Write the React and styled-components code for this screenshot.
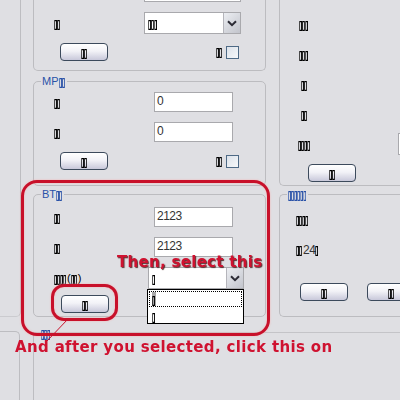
import React from 'react';
import styled, { createGlobalStyle } from 'styled-components';

const Global = createGlobalStyle`
  html, body { margin: 0; padding: 0; }
  body { background: #dfdfe3; font-family: "Liberation Sans", Arial, sans-serif; }
`;

const Screen = styled.div`
  position: relative;
  width: 400px;
  height: 400px;
  overflow: hidden;
  background: #dfdfe3;
  color: #000;
  font-size: 11px;
`;

// missing-font boxes of the original, squeezed to their narrow width
const TofuRun = styled.span`
  display: inline-block;
  width: ${p => p.$n * 3 + 1}px;
  height: 10px;
  font-family: "DejaVu Sans", sans-serif;
  font-size: 12px;
  line-height: 10px;
  vertical-align: -1px;
  text-align: left;
  white-space: nowrap;
  transform: scaleX(0.46);
  transform-origin: 0 50%;
  will-change: transform;
  -webkit-text-stroke: 0.7px currentColor;
`;

const Tofu = ({ n = 2 }) => <TofuRun $n={n}>{'\u25AF'.repeat(n)}</TofuRun>;

const TopArea = styled.div`
  display: flex;
  height: 317px;
`;

const SidePanel = styled.div`
  flex: none;
  width: 21px;
  box-sizing: border-box;
  border-right: 1px solid #bdbdc1;
  border-bottom: 1px solid #cbcbcf;
  border-bottom-right-radius: 5px;
`;

const LeftColumn = styled.div`
  flex: none;
  width: 233px;
  margin-left: 12px;
  display: flex;
  flex-direction: column;
`;

const RightColumn = styled.div`
  flex: none;
  width: 200px;
  margin-left: 13px;
  display: flex;
  flex-direction: column;
  gap: 8px;
`;

const Group = styled.div`
  position: relative;
  box-sizing: border-box;
  height: ${p => p.$height}px;
  margin-top: ${p => p.$gap || 0}px;
  padding-top: ${p => p.$pad || 0}px;
  border: 1px solid #bcbcc0;
  border-top: ${p => (p.$open ? 'none' : '1px solid #bcbcc0')};
  border-radius: ${p => (p.$open ? '0 0 5px 5px' : '5px')};
  ${p => p.$clip && 'border-right: none;'}
`;

const Legend = styled.span`
  position: absolute;
  top: -6px;
  left: ${p => p.$left || 7}px;
  padding: 0 1px;
  background: #dfdfe3;
  color: #2a52a8;
  line-height: 11px;
  white-space: nowrap;
`;

const LowLegend = styled(Legend)`
  top: -4px;
  height: 9px;
  line-height: 9px;
  background: none;
  padding: 0;
`;

const Row = styled.div`
  display: flex;
  align-items: center;
  height: ${p => p.$height || 20}px;
  margin-top: ${p => p.$top || 0}px;
  margin-bottom: ${p => p.$gap ?? 10}px;
  padding-left: ${p => p.$indent ?? 20}px;
`;

const Label = styled.span`
  flex: none;
  width: ${p => p.$width}px;
  text-align: ${p => p.$align || 'left'};
  white-space: nowrap;
  line-height: 12px;
`;

const Digits = styled.span`
  font-size: 12px;
  letter-spacing: -0.5px;
  vertical-align: -1px;
  color: #333;
`;

const Field = styled.div`
  flex: none;
  box-sizing: border-box;
  width: ${p => p.$width || 79}px;
  height: ${p => p.$height || 20}px;
  margin-left: ${p => p.$left || 0}px;
  padding: 0 2px;
  background: #fff;
  border: 1px solid #a9a9ad;
  font-size: 12px;
  letter-spacing: -0.5px;
  line-height: 17px;
  color: #333;
`;

const FieldStub = styled(Field)`
  width: 97px;
  height: 2px;
  margin-left: 110px;
  border-top: none;
`;

const SelectBox = styled.div`
  position: relative;
  flex: none;
  box-sizing: border-box;
  display: flex;
  align-items: center;
  justify-content: space-between;
  width: ${p => p.$width}px;
  height: 22px;
  padding-left: 3px;
  background: #fff;
  border: 1px solid #a9a9ad;
`;

const SelectArrow = styled.span`
  flex: none;
  display: flex;
  align-items: center;
  justify-content: center;
  width: 16px;
  height: 20px;
  background: linear-gradient(135deg, #eceef2, #c2c4cc);
  border-left: 1px solid #b5b5bb;
`;

const DropList = styled.div`
  position: absolute;
  top: 21px;
  left: -2px;
  box-sizing: border-box;
  width: 97px;
  height: 35px;
  padding: 1px;
  background: #fff;
  border: 1px solid #000;
`;

const DropItem = styled.div`
  box-sizing: border-box;
  height: 16px;
  padding-left: 2px;
  line-height: 14px;
  margin-bottom: 1px;
  border: 1px dotted ${p => (p.$active ? '#000' : 'transparent')};
`;

const Highlight = styled.span`
  display: inline-block;
  background: #a8a8a8;
`;

const Actions = styled.div`
  display: flex;
  align-items: center;
  justify-content: space-between;
  margin-top: ${p => p.$top || 0}px;
  padding-left: 26px;
  padding-right: 26px;
`;

const ButtonRow = styled.div`
  display: flex;
  gap: 19px;
  margin-top: ${p => p.$top || 0}px;
  padding-left: ${p => p.$indent}px;
`;

const PushButton = styled.button`
  flex: none;
  box-sizing: border-box;
  width: 48px;
  height: 18px;
  padding: 0;
  font: inherit;
  line-height: 14px;
  color: #000;
  background: linear-gradient(#ffffff, #f2f2f7 45%, #c8c8da);
  border: 1px solid #3c4a5c;
  border-radius: 4px;
`;

const CheckWrap = styled.span`
  display: flex;
  align-items: center;
  gap: 3px;
`;

const CheckBox = styled.span`
  display: block;
  box-sizing: border-box;
  width: 13px;
  height: 13px;
  background: linear-gradient(135deg, #dce2ea, #f6f8fa);
  border: 1px solid #4e6a86;
`;

const BottomArea = styled.div`
  display: flex;
  height: 69px;
  margin-top: 14px;
`;

const BottomStub = styled.div`
  flex: none;
  width: 20px;
  box-sizing: border-box;
  border-top: 1px solid #bdbdc1;
  border-right: 1px solid #bdbdc1;
  border-top-right-radius: 5px;
`;

const BottomGroup = styled.div`
  position: relative;
  flex: 1;
  margin: 1px 0 0 13px;
  border-top: 1px solid #c4c4c8;
  border-left: 1px solid #bdbdc1;
`;

const Callout = styled.div`
  position: absolute;
  left: ${p => p.$x}px;
  top: ${p => p.$y}px;
  width: ${p => p.$w}px;
  height: ${p => p.$h}px;
  box-sizing: border-box;
  border: 3px solid #c8102a;
  border-radius: ${p => p.$r}px;
  box-shadow: 0 0 2px rgba(255, 170, 170, 0.9), inset 0 0 2px rgba(255, 170, 170, 0.9);
`;

const Leader = styled.svg`
  position: absolute;
  left: 44px;
  top: 318px;
`;

const Note = styled.div`
  position: absolute;
  left: ${p => p.$x}px;
  top: ${p => p.$y}px;
  font-family: "DejaVu Sans", Verdana, sans-serif;
  font-weight: bold;
  font-size: 15px;
  line-height: 15px;
  letter-spacing: ${p => p.$spacing}px;
  color: #cf1230;
  white-space: nowrap;
  text-shadow: ${p => (p.$shadow ? '1px 1px 1px #5a3030' : 'none')};
`;

const Chevron = () => (
  <svg width="10" height="7" viewBox="0 0 10 7">
    <path d="M1 1.2 L5 5.2 L9 1.2" fill="none" stroke="#2b2b35" strokeWidth="2" />
  </svg>
);

const Select = ({ width, count, children }) => (
  <SelectBox $width={width}>
    <span><Tofu n={count} /></span>
    <SelectArrow><Chevron /></SelectArrow>
    {children}
  </SelectBox>
);

const Action = ({ top }) => (
  <Actions $top={top}>
    <PushButton><Tofu /></PushButton>
    <CheckWrap><Tofu /><CheckBox /></CheckWrap>
  </Actions>
);

export default function App() {
  return (
    <Screen>
      <Global />
      <TopArea>
        <SidePanel />
        <LeftColumn>
          <Group $height={71} $open>
            <FieldStub />
            <Row $height={22} $gap={9} $top={10}>
              <Label $width={90}><Tofu /></Label>
              <Select width={97} count={3} />
            </Row>
            <Action />
          </Group>
          <Group $height={105} $gap={10} $pad={10}>
            <Legend>MP<Tofu /></Legend>
            <Row><Label $width={100}><Tofu /></Label><Field>0</Field></Row>
            <Row><Label $width={100}><Tofu /></Label><Field>0</Field></Row>
            <Action top={1} />
          </Group>
          <Group $height={123} $gap={8} $pad={12}>
            <Legend>BT<Tofu /></Legend>
            <Row><Label $width={100}><Tofu /></Label><Field>2123</Field></Row>
            <Row><Label $width={100}><Tofu /></Label><Field>2123</Field></Row>
            <Row $height={22} $gap={6}>
              <Label $width={94}><Tofu n={4} />(<Tofu />)</Label>
              <Select width={96} count={1}>
                <DropList>
                  <DropItem $active><Highlight><Tofu n={1} /></Highlight></DropItem>
                  <DropItem><Tofu n={1} /></DropItem>
                </DropList>
              </Select>
            </Row>
            <ButtonRow $indent={27}><PushButton><Tofu /></PushButton></ButtonRow>
          </Group>
        </LeftColumn>
        <RightColumn>
          <Group $height={186} $open $pad={9} $clip>
            {[3, 3, 2, 2].map((n, i) => (
              <Row key={i} $height={30} $gap={0} $indent={11}>
                <Label $width={26} $align="center"><Tofu n={n} /></Label>
              </Row>
            ))}
            <Row $height={30} $gap={5} $indent={11}>
              <Label $width={26} $align="center"><Tofu n={4} /></Label>
              <Field $left={81} $width={30} $height={22} />
            </Row>
            <ButtonRow $indent={28}><PushButton><Tofu /></PushButton></ButtonRow>
          </Group>
          <Group $height={123} $pad={9} $clip>
            <Legend><Tofu n={6} /></Legend>
            <Row $height={30} $gap={0} $indent={16}><Label $width={40}><Tofu n={4} /></Label></Row>
            <Row $height={30} $gap={0} $indent={16}><Label $width={40}><Tofu /><Digits>24</Digits><Tofu n={1} /></Label></Row>
            <ButtonRow $top={19} $indent={20}>
              <PushButton><Tofu /></PushButton>
              <PushButton><Tofu /></PushButton>
            </ButtonRow>
          </Group>
        </RightColumn>
      </TopArea>
      <BottomArea>
        <BottomStub />
        <BottomGroup>
          <LowLegend $left={7}><Tofu n={3} /></LowLegend>
        </BottomGroup>
      </BottomArea>

      <Callout $x={21} $y={180} $w={249} $h={156} $r={16} />
      <Callout $x={51} $y={284} $w={67} $h={37} $r={13} />
      <Leader width="28" height="26" viewBox="0 0 28 26">
        <path d="M24 1 L3 23" stroke="#c8102a" strokeWidth="1" fill="none" />
      </Leader>
      <Note $x={117} $y={255} $spacing={0.3} $shadow>Then, select this</Note>
      <Note $x={15} $y={340} $spacing={0.35}>And after you selected, click this on</Note>
    </Screen>
  );
}
